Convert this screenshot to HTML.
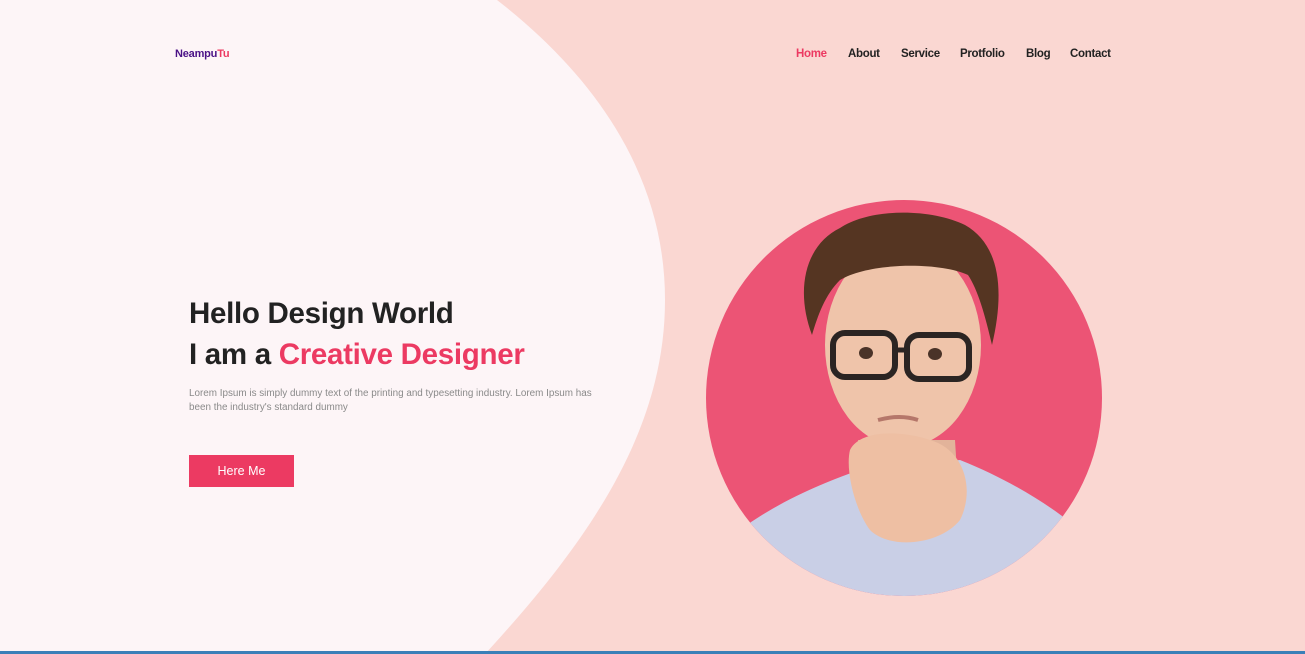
<!DOCTYPE html>
<html><head><meta charset="utf-8"><style>
*{margin:0;padding:0;box-sizing:border-box}
body{width:1305px;height:654px;overflow:hidden;background:#fad7d2;font-family:"Liberation Sans",sans-serif;position:relative}
svg.bg{position:absolute;left:0;top:0}
.logo{position:absolute;left:175px;top:48px;font-size:11px;font-weight:bold;color:#4a1186;letter-spacing:-0.2px}
.logo span{color:#ec3a62}
nav{position:absolute;top:48px;left:796px;font-size:11.5px;font-weight:bold;color:#222}
nav a{position:absolute;white-space:nowrap;letter-spacing:-0.3px}
h1{position:absolute;left:189px;top:293px;font-size:29.5px;line-height:41px;color:#222;font-weight:bold;letter-spacing:-0.3px}
h1 span{color:#ec3a62}
p{position:absolute;left:189px;top:387px;width:404px;font-size:9.9px;line-height:14px;color:#8a8a8a}
.btn{position:absolute;left:189px;top:455px;width:105px;height:32px;background:#ec3a62;color:#fff;font-size:12.5px;text-align:center;line-height:32px}
.bar{position:absolute;left:0;top:651px;width:1305px;height:3px;background:#3b7fb8}
</style></head><body>
<svg class="bg" width="1305" height="654">
<path d="M0 0 L497 0 C600 80 665 180 665 300 C665 430 590 540 485 654 L0 654 Z" fill="#fdf5f7"/>
<defs><clipPath id="c"><circle cx="904" cy="398" r="198"/></clipPath></defs>
<circle cx="904" cy="398" r="198" fill="#ec5475"/>
<g clip-path="url(#c)">
<path d="M740 530 C780 500 830 480 860 470 L960 460 C1010 480 1050 505 1080 530 L1090 620 L720 620 Z" fill="#c9cfe6"/>
<path d="M858 440 L870 520 L960 520 L955 440 Z" fill="#e2b39a"/>
<ellipse cx="903" cy="345" rx="78" ry="102" fill="#efc4aa"/>
<path d="M812 335 C795 290 805 245 840 228 C870 208 930 208 965 225 C1000 245 1005 290 992 345 C985 315 978 290 968 275 C940 262 870 262 840 280 C825 295 818 315 812 335 Z" fill="#553522"/>
<path d="M850 450 C860 430 900 430 930 440 C965 450 975 490 960 520 C940 545 890 550 870 530 C855 510 845 470 850 450 Z" fill="#eebfa3"/>
<rect x="833" y="333" width="62" height="44" rx="12" fill="none" stroke="#2b2523" stroke-width="6"/>
<rect x="907" y="335" width="62" height="44" rx="12" fill="none" stroke="#2b2523" stroke-width="6"/>
<path d="M895 350 L907 350" stroke="#2b2523" stroke-width="5"/>
<ellipse cx="866" cy="353" rx="7" ry="6" fill="#4a3328"/>
<ellipse cx="935" cy="354" rx="7" ry="6" fill="#4a3328"/>
<path d="M878 420 Q900 414 918 420" stroke="#b5776a" stroke-width="4" fill="none"/>
</g>
</svg>
<div class="logo">Neampu<span>Tu</span></div>
<nav>
<a style="left:0;color:#ec3a62">Home</a>
<a style="left:52px">About</a>
<a style="left:105px">Service</a>
<a style="left:164px">Protfolio</a>
<a style="left:230px">Blog</a>
<a style="left:274px">Contact</a>
</nav>
<h1>Hello Design World<br>I am a <span>Creative Designer</span></h1>
<p>Lorem Ipsum is simply dummy text of the printing and typesetting industry. Lorem Ipsum has been the industry's standard dummy</p>
<div class="btn">Here Me</div>
<div class="bar"></div>
</body></html>
